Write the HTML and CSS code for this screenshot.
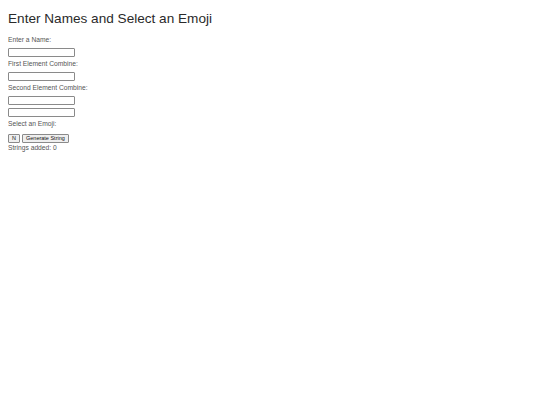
FILE: index.html
```html
<!DOCTYPE html>
<html>
<head>
<meta charset="utf-8">
<link rel="stylesheet" href="styles.css">
</head>
<body>
<h1 class="title">Enter Names and Select an Emoji</h1>
<div class="form">
  <label class="lbl">Enter a Name:</label>
  <input class="field" type="text">
  <label class="lbl">First Element Combine:</label>
  <input class="field" type="text">
  <label class="lbl">Second Element Combine:</label>
  <input class="field" type="text">
  <input class="field tight" type="text">
  <label class="lbl">Select an Emoji:</label>
  <div class="buttons">
    <button class="btn">N</button>
    <button class="btn">Generate String</button>
  </div>
  <div class="count">Strings added: 0</div>
</div>
</body>
</html>
```
FILE: styles.css
```css
body {
  margin: 8px;
  font-family: "Liberation Sans", Arial, sans-serif;
  background: #fff;
}
.title {
  margin: 2px 0 0 0;
  font-size: 13.6px;
  font-weight: normal;
  color: #2a2a2a;
  line-height: 18px;
}
.form {
  display: flex;
  flex-direction: column;
  align-items: flex-start;
  margin-top: 7px;
}
.lbl {
  display: block;
  font-size: 6.7px;
  line-height: 9px;
  color: #555;
  margin-bottom: 4px;
}
.field {
  box-sizing: border-box;
  width: 67px;
  height: 9px;
  margin: 0 0 2px 0;
  padding: 0;
  border: 1px solid #8a8a8a;
  border-radius: 1px;
  background: #fff;
}
.field.tight { margin-top: 1px; }
.buttons {
  display: flex;
  gap: 2px;
  margin-top: 2px;
}
.btn {
  font-family: "Liberation Sans", Arial, sans-serif;
  font-size: 5.5px;
  height: 9px;
  padding: 0 3px;
  border: 1px solid #8a8a8a;
  background: #efefef;
  border-radius: 1px;
  line-height: 7px;
  color: #111;
}
.count {
  font-size: 6.7px;
  line-height: 9px;
  color: #555;
  margin-top: 0;
}
```
